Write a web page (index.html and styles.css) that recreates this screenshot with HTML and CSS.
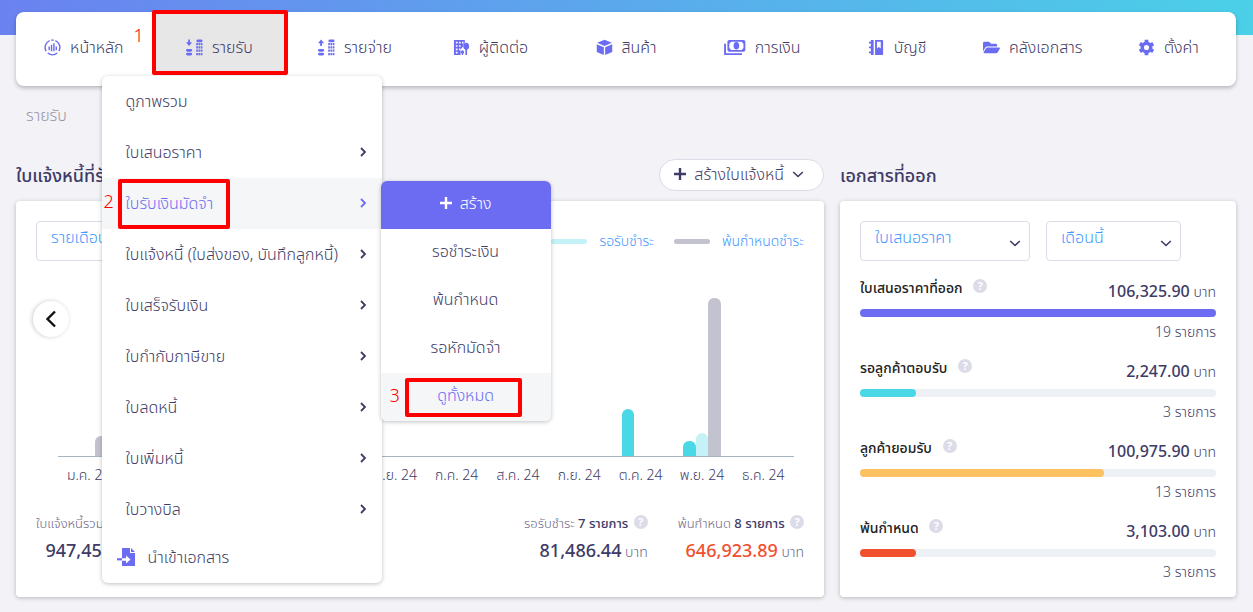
FILE: index.html
```html
<!DOCTYPE html>
<html lang="th">
<head>
    <meta charset="UTF-8">
    <meta name="viewport" content="width=device-width, initial-scale=1">
    <title>รายรับ</title>
    <link rel="stylesheet" href="styles.css">
</head>
<body>
<svg class="defs" aria-hidden="true">
    <symbol id="i-home" viewBox="0 0 18 18">
        <g fill="none" stroke="currentColor" stroke-width="1.5">
            <path d="M6 1.8a7.8 7.8 0 0 0-3.8 11M12 1.8a7.8 7.8 0 0 1 3.800 11M7.600 1.200h2.800M4 14.900a7.800 7.800 0 0 0 10 0"/>
            <path d="M5.500 8v4M8 6v7M10.500 4.500V13M13 8v4"/>
        </g>
    </symbol>
    <symbol id="i-coins" viewBox="0 0 18 18">
        <rect x="0" y="10.500" width="6.500" height="3" rx="1.500"/><rect x="0" y="14.500" width="6.500" height="3" rx="1.500"/>
        <rect x="11" y=".5" width="6.500" height="3" rx="1.500"/>
        <path fill="none" stroke="currentColor" stroke-width="2.400" stroke-dasharray="1.800 .6" d="M10.800 5.500h6.800M10.800 8.900h6.800M10.800 12.300h6.800M10.800 15.900h6.800"/>
    </symbol>
    <symbol id="i-down" viewBox="0 0 18 18"><path d="M2.300 .5h1.900v3h2.300L3.250 7.500 0 3.500h2.300z"/></symbol>
    <symbol id="i-up" viewBox="0 0 18 18"><path d="M2.300 7.500h1.900V4.500h2.300L3.250 .5 0 4.500h2.300z"/></symbol>
    <symbol id="i-contact" viewBox="0 0 18 18">
        <path fill-rule="evenodd" d="M1 1h11.500v3.200a4 4 0 0 0-1.800 3.800l-2.700 3V17H1zM3 3v1.800h1.800V3zm3.300 0v1.800h1.800V3zM9.500 3v1.800h1.600V3zM3 6.500v1.800h1.800V6.500zm3.300 0v1.800h1.800V6.500zM3 10v1.800h1.800V10zm3.300 0v1.800h1.500V10zM3 13.500v1.800h1.800v-1.800z"/>
        <path d="M14 4a3.200 3.800 0 0 1 .9 7.400V17h-1.800v-5.600A3.200 3.800 0 0 1 14 4zM10 12a1.900 1.900 0 0 1 .7 3.600V17H9.300v-1.400A1.900 1.900 0 0 1 10 12z"/>
    </symbol>
    <symbol id="i-box" viewBox="0 0 18 18">
        <path d="M9 .8l7.800 3.200L9 7.400 1.200 4zM.8 5.500L8.300 8.800V17L.8 13.800zM17.200 5.500L9.700 8.800V17l7.500-3.200z"/>
    </symbol>
    <symbol id="i-money" viewBox="0 0 24 18">
        <path fill="none" stroke="currentColor" stroke-width="2" d="M2 5v11h18"/>
        <path fill-rule="evenodd" d="M6.500 1h15a2 2 0 0 1 2 2v8.500a2 2 0 0 1-2 2h-15a2 2 0 0 1-2-2V3a2 2 0 0 1 2-2zm2 1.800L6.500 5v4.500l2 2.200h11l2-2.200V5l-2-2.200z"/>
        <ellipse cx="14" cy="7.200" rx="3" ry="3.900"/>
    </symbol>
    <symbol id="i-book" viewBox="0 0 18 18">
        <path fill-rule="evenodd" d="M3 1h3v16H3v-2H1v-1.800h2v-3.500H1V8h2V4.800H1V3h2zM7.500 1H15a1 1 0 0 1 1 1v14a1 1 0 0 1-1 1H7.500zM9.500 3v7l2-1.500 2 1.500V3z"/>
    </symbol>
    <symbol id="i-folder" viewBox="0 0 576 512">
        <path d="M572.694 292.093L500.270 416.248A63.997 63.997 0 0 1 444.989 448H45.025c-18.523 0-30.064-20.093-20.731-36.093l72.424-124.155A64 64 0 0 1 152 256h399.964c18.523 0 30.064 20.093 20.730 36.093zM152 224h328v-48c0-26.510-21.490-48-48-48H272l-64-64H48C21.490 64 0 85.490 0 112v278.046l69.077-118.418C86.214 242.250 117.989 224 152 224z"/>
    </symbol>
    <symbol id="i-gear" viewBox="0 0 18 18">
        <circle cx="9" cy="9" r="4.500" fill="none" stroke="currentColor" stroke-width="3.600"/>
        <path fill="none" stroke="currentColor" stroke-width="4" d="M9 .8v3M9 14.200v3M1.900 4.900l2.600 1.500M13.500 11.600l2.600 1.500M1.900 13.100l2.600-1.500M13.500 6.400l2.600-1.500"/>
    </symbol>
    <symbol id="i-import" viewBox="0 0 20 20">
        <path fill-rule="evenodd" d="M6 1h8v5h5v13H6v-5.200h4v2.700l4.500-4-4.500-4v2.700H6zM15 1l4 4h-4z"/>
        <path d="M1 11.200h5v2.200H1z"/>
    </symbol>
    <symbol id="i-plus" viewBox="0 0 12 12"><path d="M4.800 0h2.400v4.800H12v2.400H7.200V12H4.800V7.200H0V4.800h4.800z"/></symbol>
    <symbol id="i-chevron" viewBox="0 0 10 10"><path fill="none" stroke="currentColor" stroke-width="1.800" d="M3 1l4 4-4 4"/></symbol>
    <symbol id="i-caret" viewBox="0 0 12 12"><path fill="none" stroke="currentColor" stroke-width="1.600" d="M1.200 4L6 8.500 10.800 4"/></symbol>
    <symbol id="i-prev" viewBox="0 0 12 18"><path fill="none" stroke="currentColor" stroke-width="2.400" d="M10 1.500L2.500 9l7.500 7.500"/></symbol>
</svg>

<header class="header">
    <nav class="nav">
        <div class="nav-item"><a class="nav-link" href="#"><svg class="icon"><use href="#i-home"/></svg>หน้าหลัก</a></div>
        <div class="nav-item">
            <a class="nav-link active" href="#"><svg class="icon"><use href="#i-coins"/><use href="#i-down"/></svg>รายรับ</a>
            <span class="mark mark-nav"></span>
            <span class="step step-nav">1</span>
            <ul class="menu">
                <li><a href="#">ดูภาพรวม</a></li>
                <li><a href="#">ใบเสนอราคา<svg class="chevron"><use href="#i-chevron"/></svg></a></li>
                <li class="open">
                    <a href="#">ใบรับเงินมัดจำ<svg class="chevron"><use href="#i-chevron"/></svg></a>
                    <span class="mark mark-menu"></span>
                    <span class="step step-menu">2</span>
                    <ul class="submenu">
                        <li class="create"><a href="#"><svg class="plus"><use href="#i-plus"/></svg>สร้าง</a></li>
                        <li><a href="#">รอชำระเงิน</a></li>
                        <li><a href="#">พ้นกำหนด</a></li>
                        <li><a href="#">รอหักมัดจำ</a></li>
                        <li class="current">
                            <a href="#">ดูทั้งหมด</a>
                            <span class="mark mark-sub"></span>
                            <span class="step step-sub">3</span>
                        </li>
                    </ul>
                </li>
                <li><a href="#">ใบแจ้งหนี้ (ใบส่งของ, บันทึกลูกหนี้)<svg class="chevron"><use href="#i-chevron"/></svg></a></li>
                <li><a href="#">ใบเสร็จรับเงิน<svg class="chevron"><use href="#i-chevron"/></svg></a></li>
                <li><a href="#">ใบกำกับภาษีขาย<svg class="chevron"><use href="#i-chevron"/></svg></a></li>
                <li><a href="#">ใบลดหนี้<svg class="chevron"><use href="#i-chevron"/></svg></a></li>
                <li><a href="#">ใบเพิ่มหนี้<svg class="chevron"><use href="#i-chevron"/></svg></a></li>
                <li><a href="#">ใบวางบิล<svg class="chevron"><use href="#i-chevron"/></svg></a></li>
                <li class="import"><a href="#"><svg class="import-icon"><use href="#i-import"/></svg>นำเข้าเอกสาร</a></li>
            </ul>
        </div>
        <div class="nav-item"><a class="nav-link" href="#"><svg class="icon"><use href="#i-coins"/><use href="#i-up"/></svg>รายจ่าย</a></div>
        <div class="nav-item"><a class="nav-link" href="#"><svg class="icon"><use href="#i-contact"/></svg>ผู้ติดต่อ</a></div>
        <div class="nav-item"><a class="nav-link" href="#"><svg class="icon"><use href="#i-box"/></svg>สินค้า</a></div>
        <div class="nav-item"><a class="nav-link" href="#"><svg class="icon icon-wide"><use href="#i-money"/></svg>การเงิน</a></div>
        <div class="nav-item"><a class="nav-link" href="#"><svg class="icon"><use href="#i-book"/></svg>บัญชี</a></div>
        <div class="nav-item"><a class="nav-link" href="#"><svg class="icon"><use href="#i-folder"/></svg>คลังเอกสาร</a></div>
        <div class="nav-item"><a class="nav-link" href="#"><svg class="icon"><use href="#i-gear"/></svg>ตั้งค่า</a></div>
    </nav>
</header>

<main class="page">
    <p class="breadcrumb">รายรับ</p>
    <div class="columns">
        <section class="col-wide">
            <div class="title-bar">
                <h2>ใบแจ้งหนี้ที่รับ</h2>
                <button class="create-btn" type="button"><svg class="plus"><use href="#i-plus"/></svg>สร้างใบแจ้งหนี้<svg class="caret"><use href="#i-caret"/></svg></button>
            </div>
            <div class="card chart-card">
                <div class="chart-top">
                    <div class="select select-period">
                        <select aria-label="ช่วงเวลา"><option>รายเดือน</option></select>
                    </div>
                    <ul class="legend">
                        <li><i class="swatch light"></i>รอรับชำระ</li>
                        <li><i class="swatch grey"></i>พ้นกำหนดชำระ</li>
                    </ul>
                </div>
                <button class="prev" type="button" aria-label="ก่อนหน้า"><svg><use href="#i-prev"/></svg></button>
                <div class="chart" id="chart"></div>
                <div class="totals">
                    <div class="total total-first">
                        <p>ใบแจ้งหนี้รวม <b>115 ใบ</b> <span class="help">?</span></p>
                        <p class="amount"><b>947,458.00</b> บาท</p>
                    </div>
                    <div class="total">
                        <p>รอรับชำระ <b>7 รายการ</b> <span class="help">?</span></p>
                        <p class="amount"><b>81,486.44</b> บาท</p>
                    </div>
                    <div class="total overdue">
                        <p>พ้นกำหนด <b>8 รายการ</b> <span class="help">?</span></p>
                        <p class="amount"><b>646,923.89</b> บาท</p>
                    </div>
                </div>
            </div>
        </section>
        <section class="col-side">
            <div class="title-bar"><h2>เอกสารที่ออก</h2></div>
            <div class="card">
                <div class="filters">
                    <div class="select select-doc">
                        <select aria-label="เอกสาร"><option>ใบเสนอราคา</option></select>
                        <svg class="caret"><use href="#i-caret"/></svg>
                    </div>
                    <div class="select select-month">
                        <select aria-label="เดือน"><option>เดือนนี้</option></select>
                        <svg class="caret"><use href="#i-caret"/></svg>
                    </div>
                </div>
                <div class="stat">
                    <div class="stat-head"><span class="stat-name">ใบเสนอราคาที่ออก <span class="help">?</span></span><span class="stat-value"><b>106,325.90</b> บาท</span></div>
                    <div class="track"><div class="fill violet" style="width: 100%"></div></div>
                    <p class="count">19 รายการ</p>
                </div>
                <div class="stat">
                    <div class="stat-head"><span class="stat-name">รอลูกค้าตอบรับ <span class="help">?</span></span><span class="stat-value"><b>2,247.00</b> บาท</span></div>
                    <div class="track"><div class="fill cyan" style="width: 15.8%"></div></div>
                    <p class="count">3 รายการ</p>
                </div>
                <div class="stat">
                    <div class="stat-head"><span class="stat-name">ลูกค้ายอมรับ <span class="help">?</span></span><span class="stat-value"><b>100,975.90</b> บาท</span></div>
                    <div class="track"><div class="fill amber" style="width: 68.4%"></div></div>
                    <p class="count">13 รายการ</p>
                </div>
                <div class="stat">
                    <div class="stat-head"><span class="stat-name">พ้นกำหนด <span class="help">?</span></span><span class="stat-value"><b>3,103.00</b> บาท</span></div>
                    <div class="track"><div class="fill red" style="width: 15.8%"></div></div>
                    <p class="count">3 รายการ</p>
                </div>
            </div>
        </section>
    </div>
</main>
<script src="script.js"></script>
</body>
</html>
```
FILE: script.js
```js
// month, paid, waiting, overdue (bar heights in px)
var months = [
    ["ม.ค. 24", 0, 0, 20], ["ก.พ. 24", 0, 0, 0], ["มี.ค. 24", 0, 0, 0],
    ["เม.ย. 24", 0, 0, 0], ["พ.ค. 24", 0, 0, 0], ["มิ.ย. 24", 0, 0, 0],
    ["ก.ค. 24", 0, 0, 0], ["ส.ค. 24", 0, 0, 0], ["ก.ย. 24", 0, 0, 0],
    ["ต.ค. 24", 47, 0, 0], ["พ.ย. 24", 15, 23, 158], ["ธ.ค. 24", 0, 0, 0]
];
var colors = ["cyan", "light", "grey"];
var chart = document.getElementById("chart");

for (var i = 0; i < months.length; i++) {
    var month = document.createElement("div");
    month.className = "month";
    var bars = document.createElement("div");
    bars.className = "bars";
    for (var j = 0; j < colors.length; j++) {
        var bar = document.createElement("div");
        bar.className = "bar " + colors[j];
        bar.style.height = months[i][j + 1] + "px";
        bars.appendChild(bar);
    }
    var label = document.createElement("span");
    label.className = "month-name";
    label.textContent = months[i][0];
    month.appendChild(bars);
    month.appendChild(label);
    chart.appendChild(month);
}
```
FILE: styles.css
```css
*{
    margin: 0;
    padding: 0;
    box-sizing: border-box;
}
body{
    background-color: #f3f2f7;
    color: #3e3b66;
    font-family: "Noto Sans", "Noto Sans Thai", sans-serif;
    font-size: 16px;
    font-weight: 300;
    line-height: 24px;
}
ul{
    list-style-type: none;
}
a{
    color: inherit;
    text-decoration: none;
}
b{
    font-weight: 500;
}
svg{
    fill: currentColor;
    flex: none;
}
.defs{
    display: none;
}

/* nav */
.header{
    height: 35px;
    padding: 12px 17px 0 16px;
    background: linear-gradient(90deg, #6a82f0, #4bd0e8);
}
.nav{
    display: flex;
    height: 74px;
    background-color: #fff;
    border-radius: 8px;
    box-shadow: 0 2px 4px rgba(0, 0, 0, 0.25);
    position: relative;
    z-index: 2;
}
.nav-item{
    flex: 1;
    position: relative;
}
.nav-link{
    display: flex;
    align-items: center;
    justify-content: center;
    gap: 9px;
    height: 70px;
    white-space: nowrap;
}
.nav-link.active{
    height: 62px;
    padding-top: 8px;
    background-color: #e7e7e7;
}
.icon{
    width: 17px;
    height: 17px;
    color: #6c6cf2;
}
.icon-wide{
    width: 23px;
}

/* drop-down menus */
.menu{
    position: absolute;
    top: 64px;
    left: -50px;
    width: 280px;
    background-color: #fff;
    border-radius: 6px;
    box-shadow: 0 1px 4px rgba(0, 0, 0, 0.25);
}
.menu > li{
    position: relative;
}
.menu > li > a{
    display: flex;
    align-items: center;
    justify-content: space-between;
    height: 51px;
    padding: 0 14px 1px 24px;
    white-space: nowrap;
}
.menu > .open{
    background-color: #f5f6f8;
}
.menu > .open > a{
    color: #6c6cf2;
}
.menu > .import > a{
    justify-content: flex-start;
    gap: 12px;
    height: 48px;
    padding: 0 14px 4px;
}
.import-icon{
    width: 20px;
    height: 20px;
    color: #6c6cf2;
}
.chevron{
    width: 10px;
    height: 10px;
}
.plus{
    width: 12px;
    height: 12px;
}
.caret{
    width: 12px;
    height: 12px;
    color: #3e3b66;
}
.submenu{
    position: absolute;
    top: 3px;
    left: 279px;
    width: 170px;
    background-color: #fff;
    border-radius: 6px;
    box-shadow: 0 1px 4px rgba(0, 0, 0, 0.25);
}
.submenu li{
    position: relative;
}
.submenu a{
    display: flex;
    align-items: center;
    justify-content: center;
    gap: 8px;
    height: 48px;
    padding-bottom: 4px;
}
.submenu .create{
    background-color: #6c6cf2;
    border-radius: 6px 6px 0 0;
    color: #fff;
}
.submenu .current{
    background-color: #f5f6f8;
    border-radius: 0 0 6px 6px;
    color: #6c6cf2;
}

/* step marks */
.mark{
    position: absolute;
    border: 4px solid #f00;
    border-radius: 2px;
}
.mark-nav{
    top: -2px;
    left: 0;
    width: 136px;
    height: 65px;
}
.mark-menu{
    top: 1px;
    left: 16px;
    width: 112px;
    height: 50px;
}
.mark-sub{
    top: 5px;
    left: 24px;
    width: 117px;
    height: 39px;
}
.step{
    position: absolute;
    color: #f00;
    font-size: 18px;
}
.step-nav{
    top: 11px;
    left: -18px;
}
.step-menu{
    top: 11px;
    left: 2px;
}
.step-sub{
    top: 10px;
    left: 9px;
}

/* page */
.page{
    padding: 68px 17px 16px 16px;
}
.breadcrumb{
    padding-left: 10px;
    color: #9795a8;
}
.columns{
    display: grid;
    grid-template-columns: repeat(3, 1fr);
    gap: 16px;
    margin-top: 32px;
}
.col-wide{
    grid-column: span 2;
}
.col-wide, .col-side{
    display: flex;
    flex-direction: column;
}
.title-bar{
    display: flex;
    align-items: center;
    justify-content: space-between;
    height: 32px;
    margin-bottom: 10px;
}
h2{
    font-size: 18px;
    font-weight: 500;
}
.create-btn{
    display: flex;
    align-items: center;
    gap: 8px;
    height: 32px;
    padding: 0 19px 2px 14px;
    background-color: #fff;
    border: 1px solid #dcdbe8;
    border-radius: 16px;
    color: inherit;
    font: inherit;
}
.card{
    flex: 1;
    padding: 20px 20px 16px;
    background-color: #fff;
    border-radius: 4px;
    box-shadow: 0 1px 4px rgba(0, 0, 0, 0.25);
    position: relative;
}
.select{
    position: relative;
}
.select select{
    width: 100%;
    height: 40px;
    padding: 0 14px 8px;
    appearance: none;
    background-color: #fff;
    border: 1px solid #dcdbe8;
    border-radius: 4px;
    color: #3f97ff;
    font: inherit;
}
.select .caret{
    position: absolute;
    right: 9px;
    top: 16px;
}
.select-period{
    width: 135px;
}
.select-doc{
    width: 170px;
}
.select-month{
    width: 135px;
}
.filters{
    display: flex;
    gap: 16px;
}

/* chart */
.chart-top{
    display: flex;
    align-items: center;
    justify-content: space-between;
}
.legend{
    display: flex;
    gap: 20px;
    color: #3f97ff;
    font-size: 14px;
}
.legend li{
    display: flex;
    align-items: center;
    gap: 12px;
}
.swatch{
    width: 36px;
    height: 5px;
    border-radius: 3px;
}
.light{
    background-color: #c5f2f7;
}
.grey{
    background-color: #c3c2cf;
}
.cyan{
    background-color: #4ad7e6;
}
.violet{
    background-color: #6c6cf2;
}
.amber{
    background-color: #fdc162;
}
.red{
    background-color: #f1502f;
}
.prev{
    display: flex;
    align-items: center;
    justify-content: center;
    position: absolute;
    top: 100px;
    left: 17px;
    width: 36px;
    height: 36px;
    background-color: #fff;
    border: 0;
    border-radius: 50%;
    box-shadow: -1px 0 4px rgba(0, 0, 0, 0.2);
    color: #111;
}
.prev svg{
    width: 12px;
    height: 18px;
}
.chart{
    display: grid;
    grid-template-columns: repeat(12, 1fr);
    padding: 36px 10px 0 22px;
}
.month{
    text-align: center;
}
.bars{
    display: flex;
    align-items: flex-end;
    height: 160px;
    padding: 0 12px;
    border-bottom: 1px solid #a5b5c2;
}
.bar{
    flex: 1;
    border-radius: 6px 6px 0 0;
}
.month-name{
    display: block;
    padding-top: 6px;
    font-size: 14px;
    white-space: nowrap;
}
.totals{
    display: flex;
    gap: 30px;
    padding-top: 24px;
}
.total{
    color: #6a6888;
    font-size: 13px;
    text-align: right;
    white-space: nowrap;
}
.total-first{
    margin-right: auto;
}
.total b{
    color: #3e3b66;
}
.total .amount{
    padding-top: 3px;
    font-size: 14px;
}
.total .amount b{
    font-size: 18px;
}
.stat-value b{
    font-size: 16px;
}
.overdue .amount b{
    color: #f1502f;
}
.help{
    display: inline-block;
    width: 14px;
    height: 14px;
    margin-left: 2px;
    background-color: #dcdbe8;
    border-radius: 50%;
    color: #fff;
    font-size: 11px;
    font-weight: 700;
    line-height: 14px;
    text-align: center;
    vertical-align: 2px;
}

/* document stats */
.stat{
    padding-top: 16px;
}
.stat-head{
    display: flex;
    justify-content: space-between;
    height: 32px;
}
.stat-name{
    color: #222;
    font-size: 14px;
    font-weight: 500;
    line-height: 22px;
}
.stat-name .help{
    margin-left: 7px;
    vertical-align: 3px;
}
.stat-value{
    font-size: 14px;
    line-height: 28px;
}
.track{
    height: 8px;
    background-color: #edf0f5;
    border-radius: 4px;
}
.fill{
    height: 8px;
    border-radius: 4px;
}
.count{
    padding-top: 6px;
    font-size: 14px;
    line-height: 18px;
    text-align: right;
}
```
